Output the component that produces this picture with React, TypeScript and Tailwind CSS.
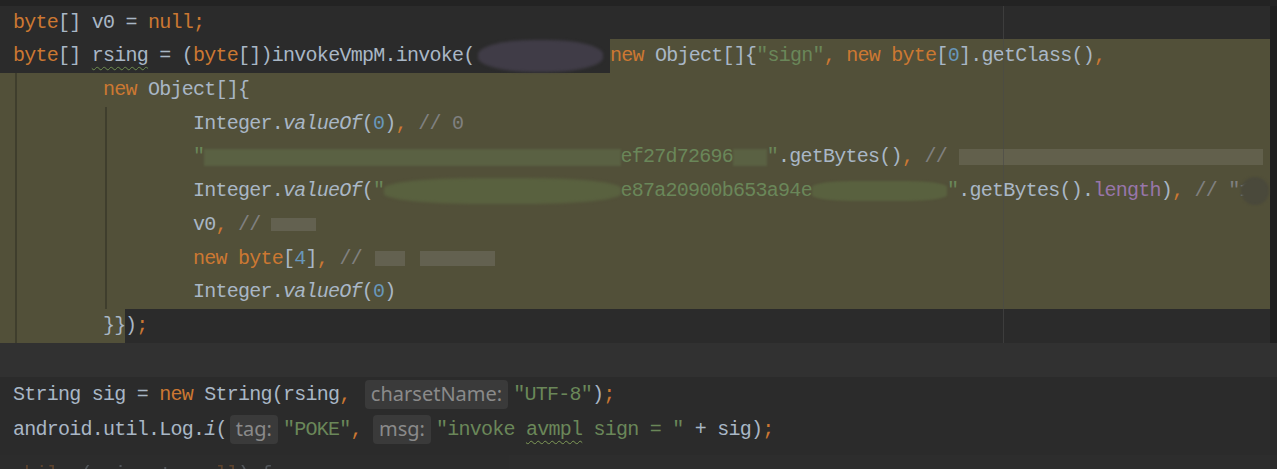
import type { ReactNode } from "react";

type P = { children: ReactNode };

const K = ({ children }: P) => <span className="text-[#cc7832]">{children}</span>;
const N = ({ children }: P) => <span className="text-[#6897bb]">{children}</span>;
const S = ({ children }: P) => <span className="text-[#6a8759]">{children}</span>;
const C = ({ children }: P) => <span className="text-[#808080]">{children}</span>;
const It = ({ children }: P) => <span className="italic">{children}</span>;
const F = ({ children }: P) => <span className="text-[#9876aa]">{children}</span>;

// parameter hint, like IntelliJ's inlay "charsetName:"
function Hint({ label, className }: { label: string; className: string }) {
  return (
    <span
      className={
        "inline-flex h-[29px] items-center rounded-[4px] bg-[#3a3a3a] px-[6px] align-middle font-['Noto_Sans',sans-serif] text-[20px] tracking-normal text-[#8a8a8a] " +
        className
      }
    >
      {label}
    </span>
  );
}

export default function App() {
  return (
    <div className="relative h-[469px] w-[1277px] overflow-hidden bg-[#2b2b2b] font-['Liberation_Mono',monospace] text-[20px] tracking-[-0.75px] whitespace-pre text-[#a9b7c6]">
      <div className="h-[6px] bg-[#232323]" />

      {/* selected code block */}
      <div className="flex">
        <div className="w-[1270px]">
          <div className="flex h-[33px] items-center pl-[13px]">
            <span>
              <K>byte</K>[] v0 = <K>null;</K>
            </span>
          </div>

          <div className="flex h-[34px]">
            <div className="flex w-[610px] items-center pl-[13px]">
              <span>
                <K>byte</K>[]{" "}
                <span className="underline decoration-[#6f8f4f] decoration-wavy decoration-1 underline-offset-[5px]">rsing</span>
                {" "}= (<K>byte</K>[])invokeVmpM.invoke(
                <span className="ml-[4px] inline-block h-[32px] w-[125px] rounded-[45%] bg-[#403c47] align-middle blur-[1.5px]" />
              </span>
            </div>
            <div className="flex flex-1 items-center bg-[#525039]">
              <span>
                <K>new</K> Object[]{"{"}<S>"sign"</S><K>, new byte</K>[<N>0</N>].getClass()<K>,</K>
              </span>
            </div>
          </div>

          <div className="flex h-[33.75px] items-center bg-[#525039] pl-[13px]">
            <span>
              {"        "}<K>new</K> Object[]{"{"}
            </span>
          </div>
          <div className="flex h-[33.75px] items-center bg-[#525039] pl-[13px]">
            <span>
              {"                "}Integer.<It>valueOf</It>(<N>0</N>)<K>,</K> <C>// 0</C>
            </span>
          </div>
          <div className="flex h-[33.75px] items-center bg-[#525039] pl-[13px]">
            <span>
              {"                "}<S>"</S>
              <span className="inline-block h-[17px] w-[416.25px] bg-[#5a6143] align-middle blur-[1px]" />
              <S>ef27d72696</S>
              <span className="inline-block h-[17px] w-[33.75px] bg-[#5a6143] align-middle blur-[1px]" />
              <S>"</S>.getBytes()<K>,</K> <C>// </C>
              <span className="ml-[1px] inline-block h-[16px] w-[304px] bg-[#62604c] align-middle" />
            </span>
          </div>
          <div className="flex h-[33.75px] items-center bg-[#525039] pl-[13px]">
            <span>
              {"                "}Integer.<It>valueOf</It>(<S>"</S>
              <span className="inline-block h-[26px] w-[236.25px] rounded-[40%] bg-[#59613f] align-middle blur-[1.5px]" />
              <S>e87a20900b653a94e</S>
              <span className="inline-block h-[20px] w-[135px] rounded-[30%] bg-[#59613f] align-middle blur-[1px]" />
              <S>"</S>.getBytes().<F>length</F>)<K>,</K> <C>// "1</C>
              <span className="ml-[-10px] inline-block h-[28px] w-[28px] rounded-full bg-[#4a493b] align-middle blur-[1px]" />
            </span>
          </div>
          <div className="flex h-[33.75px] items-center bg-[#525039] pl-[13px]">
            <span>
              {"                "}v0<K>,</K> <C>//</C>
              <span className="ml-[10px] inline-block h-[13px] w-[45px] bg-[#636150] align-middle" />
            </span>
          </div>
          <div className="flex h-[33.75px] items-center bg-[#525039] pl-[13px]">
            <span>
              {"                "}<K>new byte</K>[<N>4</N>]<K>,</K> <C>//</C>
              <span className="ml-[13px] inline-block h-[15px] w-[30px] bg-[#636150] align-middle" />
              <span className="ml-[15px] inline-block h-[15px] w-[75px] bg-[#636150] align-middle" />
            </span>
          </div>
          <div className="flex h-[33.75px] items-center bg-[#525039] pl-[13px]">
            <span>
              {"                "}Integer.<It>valueOf</It>(<N>0</N>)
            </span>
          </div>
          <div className="flex h-[33.75px]">
            <div className="flex w-[125px] items-center bg-[#525039] pl-[13px]">
              <span>{"        }}"}</span>
            </div>
            <div className="flex items-center">
              <span>
                )<K>;</K>
              </span>
            </div>
          </div>
        </div>
        <div className="w-[7px] bg-[#1f1f1f]" />
      </div>

      <div className="h-[34px] bg-[#313131]" />

      {/* second snippet */}
      <div className="flex h-[35px] items-center pl-[13px]">
        <span>
          String sig = <K>new</K> String(rsing<K>,</K>{" "}
          <Hint label="charsetName:" className="ml-[3px]" />
          <span className="ml-[5px]">
            <S>"UTF-8"</S>)<K>;</K>
          </span>
        </span>
      </div>
      <div className="flex h-[35px] items-center pl-[13px]">
        <span>
          android.util.Log.<It>i</It>(
          <Hint label="tag:" className="ml-[3px]" />
          <span className="ml-[5px]">
            <S>"POKE"</S><K>,</K>{" "}
          </span>
          <Hint label="msg:" className="ml-0" />
          <span className="ml-[5px]">
            <S>
              "invoke{" "}
              <span className="underline decoration-[#7f9a57] decoration-wavy decoration-1 underline-offset-[5px]">avmpl</span>
              {" "}sign = "
            </S>{" "}
            + sig)<K>;</K>
          </span>
        </span>
      </div>
      <div className="h-[8px]" />
      <div className="h-[14px] overflow-hidden bg-[#313131] pl-[13px] leading-[40px] opacity-30">
        <K>while</K> (rsing != <K>null</K>) {"{"}
      </div>

      {/* indent guides and right margin line */}
      <div className="absolute top-[73px] left-[15px] h-[270px] w-[2px] bg-[#3f3e2d]" />
      <div className="absolute top-[107px] left-[105px] h-[202px] w-[2px] bg-[#3f3e2d]" />
      <div className="absolute top-[6px] left-[1003px] h-[337px] w-px bg-[#4a4a4a]/60" />
    </div>
  );
}
